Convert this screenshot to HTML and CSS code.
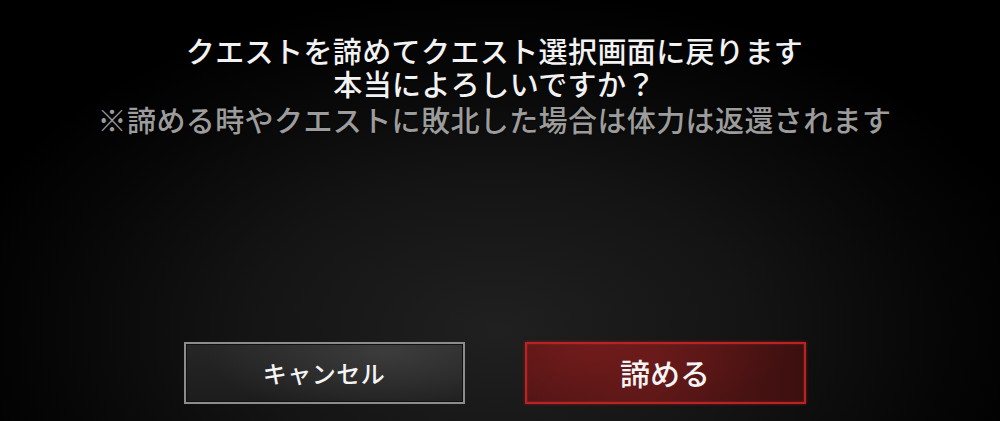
FILE: index.html
```html
<!DOCTYPE html>
<html lang="ja">
<head>
<meta charset="utf-8">
<title>クエストを諦める</title>
<link rel="stylesheet" href="styles.css">
</head>
<body>
<main class="dialog">
  <section class="message">
    <p class="line">クエストを諦めてクエスト選択画面に戻ります</p>
    <p class="line">本当によろしいですか？</p>
    <p class="line note">※諦める時やクエストに敗北した場合は体力は返還されます</p>
  </section>
  <div class="actions">
    <button class="btn btn-cancel" type="button">キャンセル</button>
    <button class="btn btn-giveup" type="button">諦める</button>
  </div>
</main>
</body>
</html>
```

FILE: styles.css
```css
html, body {
  margin: 0;
  padding: 0;
  width: 1000px;
  height: 421px;
  overflow: hidden;
}

body {
  background:
    radial-gradient(ellipse 560px 340px at 497px 330px, #202020 0%, #141414 45%, #060606 80%, #000 100%),
    #000;
  font-family: "Noto Sans CJK JP", "Noto Sans", sans-serif;
  color: #f2f2f2;
}

.dialog {
  height: 421px;
  box-sizing: border-box;
  padding: 34px 11px 17px 0;
  display: flex;
  flex-direction: column;
  align-items: center;
}

.message {
  text-align: center;
}

.line {
  margin: 0;
  font-size: 29px;
  line-height: 33px;
  letter-spacing: 0.4px;
  font-weight: 500;
  white-space: nowrap;
  text-shadow: 0 0 2px rgba(0, 0, 0, 0.8);
}

.note {
  margin-top: 3px;
  color: #9c9c9c;
}

.actions {
  margin-top: auto;
  display: flex;
  gap: 60px;
}

.btn {
  width: 281px;
  height: 62px;
  box-sizing: border-box;
  font-family: "Noto Sans CJK JP", "Noto Sans", sans-serif;
  font-weight: 500;
  color: #f4f4f4;
  display: flex;
  align-items: center;
  justify-content: center;
  padding: 0 0 2px 0;
  cursor: pointer;
}

.btn-cancel {
  border: 2px solid #8c8c8c;
  font-size: 24px;
  letter-spacing: 0.5px;
  background:
    radial-gradient(ellipse 180px 70px at 72% 10%, rgba(80, 80, 80, 0.55), rgba(80, 80, 80, 0) 100%),
    linear-gradient(180deg, #262626 0%, #1c1c1c 100%);
  box-shadow: inset 0 0 0 1px #111;
}

.btn-giveup {
  border: 2px solid #b82323;
  font-size: 30px;
  background:
    radial-gradient(ellipse 200px 70px at 22% 10%, rgba(130, 30, 30, 0.6), rgba(130, 30, 30, 0) 100%),
    linear-gradient(90deg, #4e1414 0%, #5a1717 45%, #3c0f0f 100%);
  box-shadow: 0 0 3px rgba(200, 30, 30, 0.55), inset 0 0 2px rgba(220, 50, 50, 0.5);
}
```
